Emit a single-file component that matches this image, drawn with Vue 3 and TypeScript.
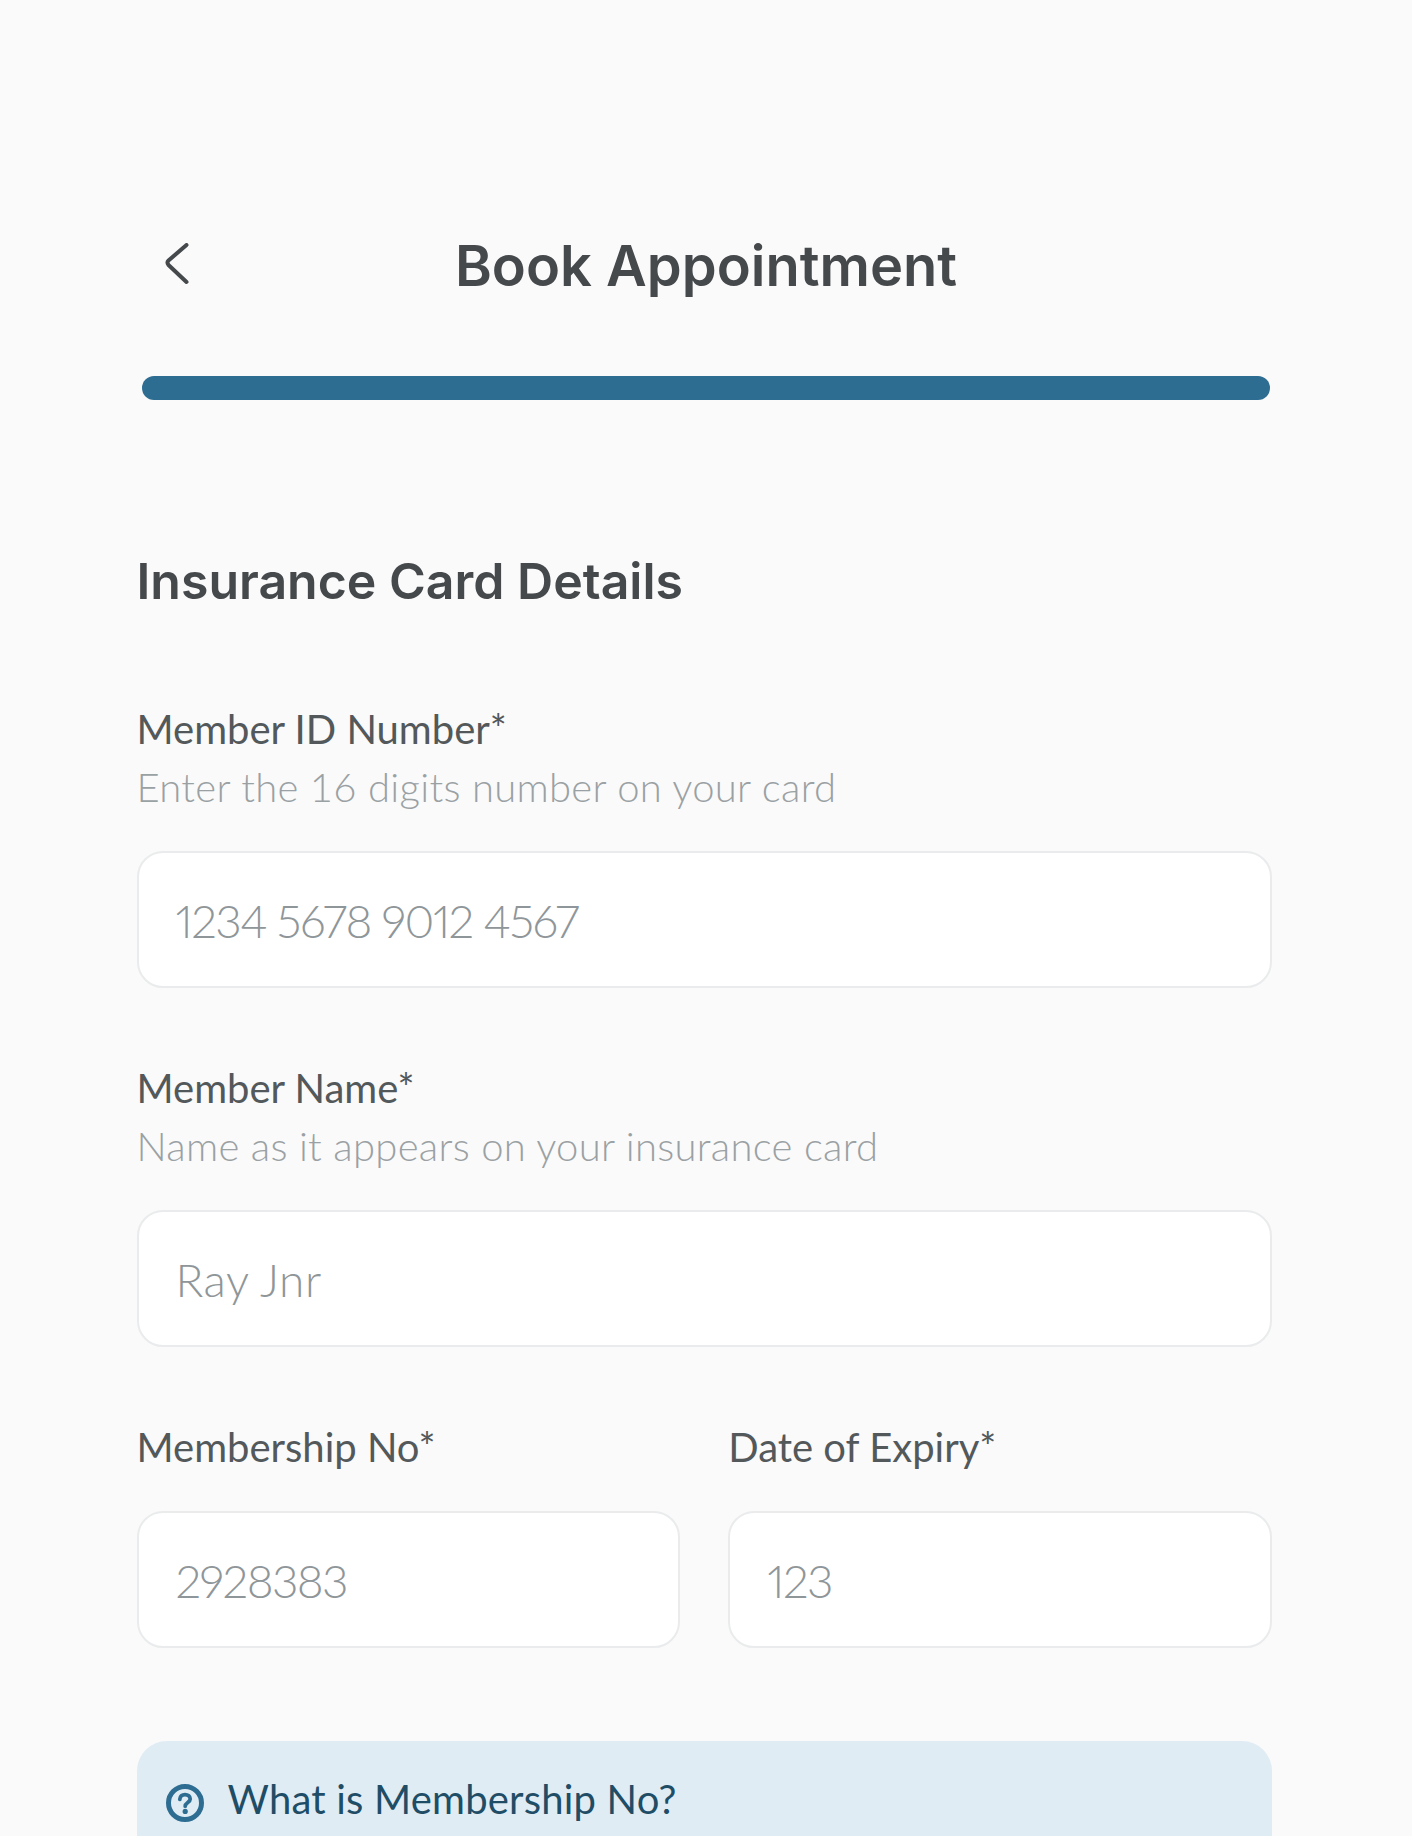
<script setup lang="ts">
interface Field {
  label: string
  hint?: string
  placeholder: string
  numeric?: boolean
}

const fullFields: Field[] = [
  { label: 'Member ID Number*', hint: 'Enter the 16 digits number on your card', placeholder: '1234 5678 9012 4567', numeric: true },
  { label: 'Member Name*', hint: 'Name as it appears on your insurance card', placeholder: 'Ray Jnr' },
]
const halfFields: Field[] = [
  { label: 'Membership No*', placeholder: '2928383', numeric: true },
  { label: 'Date of Expiry*', placeholder: '123', numeric: true },
]
</script>

<template>
  <div class="page">
    <header class="header">
      <button class="back" type="button" aria-label="Back">
        <svg width="24" height="42" viewBox="0 0 24 42" fill="none">
          <path d="M21.5 2 L3.5 17.5 Q1.5 19.5 3.5 22 L21.5 39" stroke="#45494c" stroke-width="4" stroke-linecap="round" stroke-linejoin="round" />
        </svg>
      </button>
      <h1 class="title">Book Appointment</h1>
      <span></span>
    </header>
    <div class="progress"></div>

    <main class="form">
      <h2 class="section">Insurance Card Details</h2>
      <div v-for="f in fullFields" :key="f.label" class="group">
        <div class="label">{{ f.label }}</div>
        <div class="hint">{{ f.hint }}</div>
        <div class="input" :class="{ numeric: f.numeric }">{{ f.placeholder }}</div>
      </div>
      <div class="row">
        <div v-for="f in halfFields" :key="f.label" class="group">
          <div class="label">{{ f.label }}</div>
          <div class="input" :class="{ numeric: f.numeric }">{{ f.placeholder }}</div>
        </div>
      </div>
      <section class="info">
        <svg class="info-icon" width="38" height="38" viewBox="0 0 38 38" fill="none">
          <circle cx="19" cy="19" r="16.5" stroke="#2e6d92" stroke-width="5" />
          <path d="M13.8 15.4 C13.9 12.2 16.2 10.6 19 10.6 C22 10.6 24.2 12.3 24.2 15 C24.2 18.4 19.2 18.6 19.2 22.2" stroke="#2e6d92" stroke-width="3.8" stroke-linecap="round" />
          <circle cx="19.2" cy="27.4" r="2.6" fill="#2e6d92" />
        </svg>
        <span class="info-text">What is Membership No?</span>
      </section>
    </main>
  </div>
</template>

<style scoped>
.page {
  width: 1412px;
  height: 1836px;
  overflow: hidden;
  box-sizing: border-box;
  background: #fafafa;
  padding-top: 216px;
  font-family: "Lato", "Liberation Sans", sans-serif;
}
.header {
  height: 100px;
  display: grid;
  grid-template-columns: 1fr auto 1fr;
  align-items: center;
}
.back {
  justify-self: start;
  margin: -4px 0 0 165px;
  padding: 0;
  border: 0;
  background: none;
  display: flex;
}
.title {
  margin: 0;
  font-family: "Inter", "Liberation Sans", sans-serif;
  font-size: 56px;
  line-height: 100px;
  font-weight: 600;
  color: #45494c;
}
.progress {
  margin: 60px 0 0 141.5px;
  width: 1128.5px;
  height: 23.5px;
  border-radius: 12px;
  background: #2e6d92;
}
.form {
  margin: 151.5px 0 0 136.5px;
  width: 1135.5px;
}
.section {
  margin: 0 0 89px;
  font-family: "Inter", "Liberation Sans", sans-serif;
  font-size: 50px;
  line-height: 60px;
  font-weight: 600;
  color: #45494c;
}
.group {
  margin-bottom: 71px;
}
.label {
  font-size: 40px;
  line-height: 58px;
  color: #53585b;
}
.hint {
  font-size: 40px;
  line-height: 58px;
  font-weight: 300;
  letter-spacing: 0.3px;
  color: #9aa1a4;
}
.input {
  margin-top: 35px;
  height: 137px;
  box-sizing: border-box;
  padding: 2px 0 0 37px;
  display: flex;
  align-items: center;
  background: #fff;
  border: 2px solid #e9ebec;
  border-radius: 26px;
  font-size: 46px;
  font-weight: 300;
  letter-spacing: 0.5px;
  color: #8f9699;
}
.numeric {
  font-variant-numeric: proportional-nums;
  letter-spacing: -1.6px;
}
.row {
  display: grid;
  grid-template-columns: 1fr 1fr;
  gap: 48px;
}
.row .group {
  margin-bottom: 93px;
}
.info {
  height: 200px;
  box-sizing: border-box;
  padding: 36px 29px 0;
  display: flex;
  align-items: flex-start;
  gap: 24px;
  background: #e0ecf4;
  border-radius: 30px;
}
.info-icon {
  margin-top: 7px;
  flex: none;
}
.info-text {
  font-size: 40px;
  line-height: 44px;
  letter-spacing: 0.2px;
  color: #1f4d66;
}
</style>

<style>
html, body {
  margin: 0;
  background: #fafafa;
}
</style>
